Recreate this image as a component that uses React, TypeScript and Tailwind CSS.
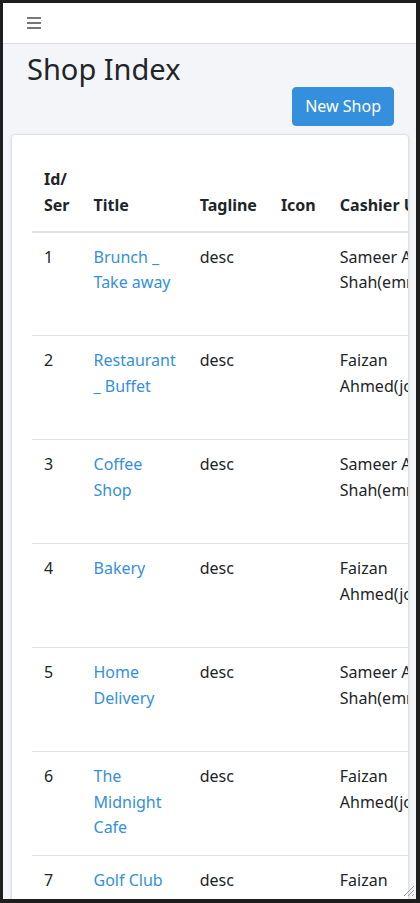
import React from 'react';

type Shop = { id: number; title: string; tagline: string; cashier: string };

const shops: Shop[] = [
  { id: 1, title: 'Brunch _ Take away', tagline: 'desc', cashier: 'Sameer Ali Shah(emma@gmail.com)' },
  { id: 2, title: 'Restaurant _ Buffet', tagline: 'desc', cashier: 'Faizan Ahmed(john@gmail.com)' },
  { id: 3, title: 'Coffee Shop', tagline: 'desc', cashier: 'Sameer Ali Shah(emma@gmail.com)' },
  { id: 4, title: 'Bakery', tagline: 'desc', cashier: 'Faizan Ahmed(john@gmail.com)' },
  { id: 5, title: 'Home Delivery', tagline: 'desc', cashier: 'Sameer Ali Shah(emma@gmail.com)' },
  { id: 6, title: 'The Midnight Cafe', tagline: 'desc', cashier: 'Faizan Ahmed(john@gmail.com)' },
  { id: 7, title: 'Golf Club', tagline: 'desc', cashier: 'Faizan Ahmed(john@gmail.com)' },
];

export default function App() {
  return (
    <div className="relative h-[903px] overflow-hidden border-t-[3px] border-l-[3px] border-r-4 border-b-4 border-[#1e1e1e] bg-[#f4f5f9] font-['Noto_Sans',sans-serif] text-[16px] text-[#212529]">
      {/* Navbar */}
      <nav className="flex h-[41px] items-center border-b border-[#dadde3] bg-white px-6">
        <button aria-label="Open menu" className="text-[#777]">
          <svg width="14" height="12" viewBox="0 0 14 12">
            <rect x="0" y="0" width="14" height="2" fill="currentColor" />
            <rect x="0" y="5" width="14" height="2" fill="currentColor" />
            <rect x="0" y="10" width="14" height="2" fill="currentColor" />
          </svg>
        </button>
      </nav>

      <main className="pl-2 pr-[7px]">
        <h1 className="mt-[8px] px-4 text-[29px] leading-[1.2] font-normal">Shop Index</h1>
        <div className="flex justify-end pr-[15px]">
          <button className="rounded border border-[#3490dc] bg-[#3490dc] px-3 py-1.5 leading-[1.6] text-white">
            New Shop
          </button>
        </div>

        {/* Card */}
        <div className="mt-2 overflow-hidden rounded border border-[#dfe2e6] bg-white p-5 shadow-sm">
          <table className="border-collapse text-left">
            <thead>
              <tr>
                <th className="w-[50px] border-b-2 border-[#dee2e6] px-3 pt-3 pb-[12px] align-bottom leading-[1.6] font-bold">Id/ Ser</th>
                <th className="w-[106px] min-w-[106px] border-b-2 border-[#dee2e6] px-3 pt-3 pb-[12px] align-bottom leading-[1.6] font-bold">Title</th>
                <th className="w-[81px] border-b-2 border-[#dee2e6] px-3 pt-3 pb-[12px] align-bottom leading-[1.6] font-bold">Tagline</th>
                <th className="w-[59px] border-b-2 border-[#dee2e6] px-3 pt-3 pb-[12px] align-bottom leading-[1.6] font-bold">Icon</th>
                <th className="min-w-[170px] border-b-2 border-[#dee2e6] px-3 pt-3 pb-[12px] align-bottom leading-[1.6] font-bold whitespace-nowrap">Cashier Users</th>
                <th className="min-w-[120px] border-b-2 border-[#dee2e6] px-3 pt-3 pb-[12px] align-bottom leading-[1.6] font-bold">Actions</th>
              </tr>
            </thead>
            <tbody>
              {shops.map((shop) => (
                <tr key={shop.id} className="h-[104px] border-t border-[#dee2e6]">
                  <td className="p-3 align-top leading-[1.6]">{shop.id}</td>
                  <td className="p-3 align-top leading-[1.6]">
                    <a href="#" className="text-[#3490dc]">{shop.title}</a>
                  </td>
                  <td className="p-3 align-top leading-[1.6]">{shop.tagline}</td>
                  <td className="p-3 align-top leading-[1.6]"></td>
                  <td className="w-[170px] max-w-[170px] p-3 align-top leading-[1.6]">{shop.cashier}</td>
                  <td className="p-3 align-top leading-[1.6]"></td>
                </tr>
              ))}
            </tbody>
          </table>
        </div>
      </main>

      {/* Resize grip */}
      <svg className="absolute right-[1px] bottom-[2px]" width="12" height="12" viewBox="0 0 12 12">
        <line x1="11" y1="1" x2="1" y2="11" stroke="#9a9a9a" strokeWidth="1" />
        <line x1="11" y1="5" x2="5" y2="11" stroke="#9a9a9a" strokeWidth="1" />
        <line x1="11" y1="9" x2="9" y2="11" stroke="#9a9a9a" strokeWidth="1" />
      </svg>
    </div>
  );
}
